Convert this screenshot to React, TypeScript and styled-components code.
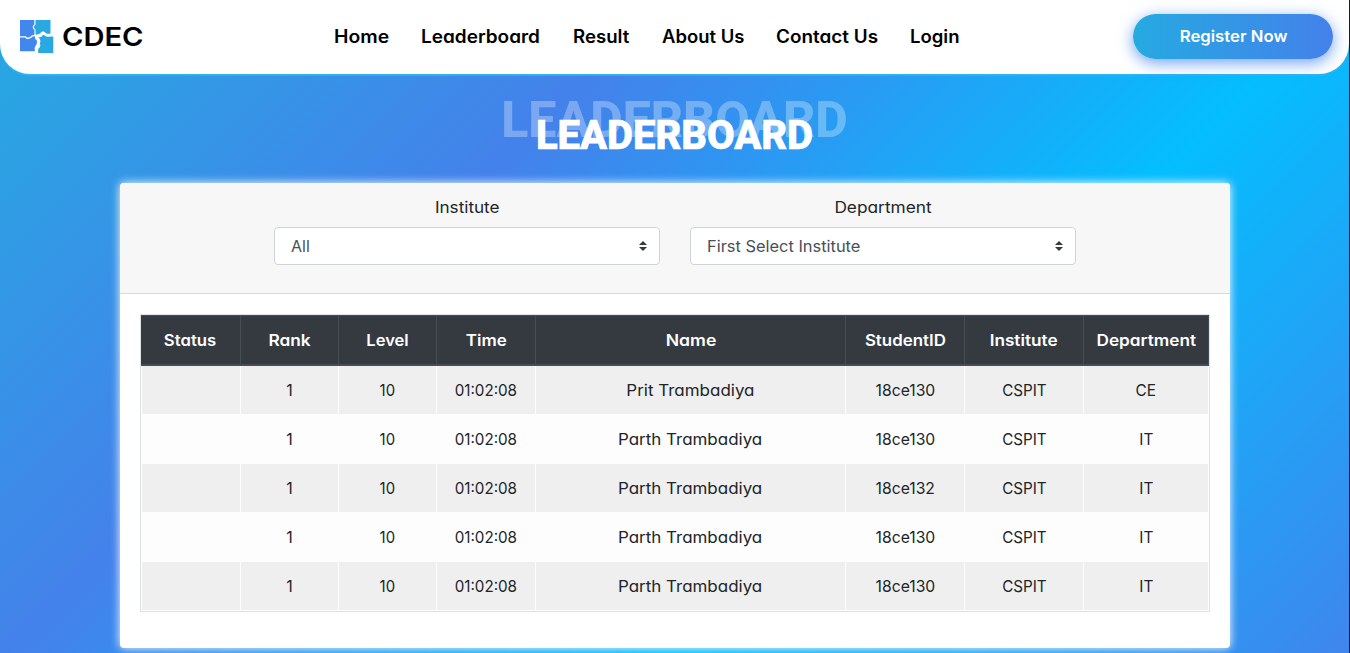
import React from "react";
import styled, { createGlobalStyle } from "styled-components";

const GlobalStyle = createGlobalStyle`
  *, *::before, *::after { box-sizing: border-box; }
  html, body { margin: 0; height: 653px; overflow: hidden; }
  body {
    font-family: Inter, "Open Sans", sans-serif;
    font-feature-settings: "cv11";
    font-size: 16px;
    line-height: 24px;
    color: #212529;
  }
`;

const Page = styled.div`
  display: flex;
  flex-direction: column;
  align-items: center;
  height: 653px;
  border-right: 1px solid #151c24;
  background: linear-gradient(135deg, #25aae1, #4481eb, #04befe, #3f86ed);
`;

const Header = styled.header`
  display: flex;
  align-items: center;
  flex: none;
  width: 100%;
  height: 74px;
  padding: 0 16px 0 20px;
  background: #fff;
  border-radius: 0 0 30px 30px;
  box-shadow: 0 2px 0 -0.3px #2fb3f3;
`;

const Brand = styled.a`
  display: flex;
  align-items: center;
  gap: 8px;
  width: 313.5px;
  padding-bottom: 1px;
  color: #000;
`;

const BrandName = styled.span`
  font-size: 26px;
  font-weight: 600;
  transform: scaleX(1.12);
  transform-origin: left center;
`;

const Nav = styled.nav`
  display: flex;
  gap: 32px;
`;

const NavLink = styled.a<{ $width: number; $stretch: number }>`
  width: ${(p) => p.$width}px;
  font-size: 18px;
  font-weight: 600;
  color: #000;
  white-space: nowrap;
  transform: scaleX(${(p) => p.$stretch});
  transform-origin: left center;
`;

const Wide = styled.span<{ $stretch: number; $origin?: string }>`
  display: inline-block;
  white-space: nowrap;
  transform: scaleX(${(p) => p.$stretch});
  transform-origin: ${(p) => p.$origin ?? "center"};
`;

const RegisterButton = styled.button`
  width: 200px;
  height: 45px;
  margin: 0 0 1px auto;
  padding: 0 0 2px 1px;
  border: 0;
  border-radius: 50px;
  font: inherit;
  font-weight: 600;
  color: #fff;
  background: linear-gradient(to right, #25aae1, #4481eb);
  box-shadow: 0 4px 15px 0 rgba(65, 132, 234, 0.75);
`;

const Title = styled.h1`
  position: relative;
  flex: none;
  margin: 39px 0 24px;
  font-family: Roboto, sans-serif;
  font-size: 40px;
  line-height: 46px;
  font-weight: 800;
  color: #fff;
`;

const TitleEcho = styled.span`
  position: absolute;
  left: 50%;
  top: -16px;
  transform: translateX(-50%);
  font-size: 50px;
  color: rgba(255, 255, 255, 0.3);
`;

const TitleText = styled.span`
  position: relative;
  -webkit-text-stroke: 0.7px #fff;
`;

const Card = styled.section`
  flex: none;
  width: 1110px;
  height: 465px;
  margin-left: 1px;
  border-radius: 4px;
  background: #fff;
  box-shadow: 0 0 10px #fff;
`;

const Filters = styled.div`
  display: flex;
  justify-content: center;
  gap: 30px;
  height: 111px;
  padding-top: 12px;
  border-bottom: 1px solid #d9dadb;
  border-radius: 4px 4px 0 0;
  background: #f7f7f7;
`;

const Field = styled.div`
  display: flex;
  flex-direction: column;
  align-items: center;
  gap: 8px;
  width: 386px;
`;

const Select = styled.div`
  display: flex;
  align-items: center;
  justify-content: space-between;
  width: 100%;
  height: 38px;
  padding: 0 12px 0 16px;
  border: 1px solid #ced4da;
  border-radius: 4px;
  background: #fff;
  color: #495057;
`;

const TableFrame = styled.div`
  margin: 20px 20px 0;
  border: 1px solid #dee2e6;
`;

const Table = styled.table`
  width: 1068px;
  table-layout: fixed;
  border-collapse: separate;
  border-spacing: 0;
  text-align: center;
`;

const HeadCell = styled.th`
  height: 51px;
  padding: 0;
  border: solid #454d55;
  border-width: 1px 1px 2px 0;
  background: #343a40;
  color: #fff;
  font-weight: 600;
`;

const BodyRow = styled.tr`
  background: #fdfdfd;
  &:nth-child(odd) { background: #efefef; }
`;

const Cell = styled.td`
  height: 49px;
  padding: 0;
  border: solid #fdfdfd;
  border-width: 0 1px 1px 0;
  &:first-child { border-left-width: 1px; }
`;

const LogoMark = () => (
  <svg width="34" height="35" viewBox="0 0 34 35">
    <path fill="#4187ee" d="M0 1h14.3v4.5c-2.2 1.4-2 4 .1 5.2V16c-2.3-.3-3.2.6-4 1.8-1.4 1.2-3.6 1.1-4.6-.6H0z" />
    <path fill="#28a9e2" d="M15.5 1h15v13.4c-2.2.5-4.3.4-5-.5-1.2-1.8-4.1-1.9-5.2.3-1 .9-3 1.4-4.8 1.3v-5c-2.2-1.5-2.1-3.6 0-4.8z" />
    <path fill="#4187ee" d="M0 18.4h5.2c1.3 1.9 4.4 2 6 .4 1-1 2.2-1.8 3.6-1.5 0 1.9.4 3.1 1.8 3.8.7 2.1.5 3.7-.8 5.4-1.2 1.3-1.3 2.8-.9 5.7H0z" />
    <path fill="#28a9e2" d="M18.3 18.2c2.2-.1 4.1-.6 4.5-2.3 1-.7 2.4 1.8 4.4 1.8 1.6 0 2.5-.4 6.1-.3V34H18.2v-3.9c2-1.8 2.8-3.6 1.6-5.5 1.1-2.1.8-4.4-1.5-6.4z" />
  </svg>
);

const Arrows = () => (
  <svg width="8" height="10" viewBox="0 0 4 5">
    <path fill="#343a40" d="M2 0L0 2h4zm0 5L0 3h4z" />
  </svg>
);

const links: [string, number, number][] = [
  ["Home", 55.4, 1.075], ["Leaderboard", 120.3, 1.055], ["Result", 56.4, 1.035],
  ["About Us", 82.2, 1.025], ["Contact Us", 102.2, 1.05], ["Login", 50, 1.03],
];

const columns: [string, number, number][] = [
  ["Status", 100, 1.045], ["Rank", 98, 1.08], ["Level", 98, 1.035], ["Time", 99, 1.06],
  ["Name", 310, 1.1], ["StudentID", 119, 1.055], ["Institute", 119, 1.075], ["Department", 125, 1.075],
];

const stretch = [1, 1, 0.93, 0.95, 1.06, 0.98, 0.95, 0.96];

const rows = [
  ["", "1", "10", "01:02:08", "Prit Trambadiya", "18ce130", "CSPIT", "CE"],
  ["", "1", "10", "01:02:08", "Parth Trambadiya", "18ce130", "CSPIT", "IT"],
  ["", "1", "10", "01:02:08", "Parth Trambadiya", "18ce132", "CSPIT", "IT"],
  ["", "1", "10", "01:02:08", "Parth Trambadiya", "18ce130", "CSPIT", "IT"],
  ["", "1", "10", "01:02:08", "Parth Trambadiya", "18ce130", "CSPIT", "IT"],
];

export default function App() {
  return (
    <Page>
      <GlobalStyle />
      <Header>
        <Brand>
          <LogoMark />
          <BrandName>CDEC</BrandName>
        </Brand>
        <Nav>
          {links.map(([label, width, s]) => (
            <NavLink key={label} $width={width} $stretch={s}>{label}</NavLink>
          ))}
        </Nav>
        <RegisterButton><Wide $stretch={1.045}>Register Now</Wide></RegisterButton>
      </Header>
      <Title>
        <TitleEcho aria-hidden>LEADERBOARD</TitleEcho>
        <TitleText>LEADERBOARD</TitleText>
      </Title>
      <Card>
        <Filters>
          <Field>
            <Wide $stretch={1.07}>Institute</Wide>
            <Select><Wide $stretch={1} $origin="left">All</Wide><Arrows /></Select>
          </Field>
          <Field>
            <Wide $stretch={1.08}>Department</Wide>
            <Select><Wide $stretch={1.025} $origin="left">First Select Institute</Wide><Arrows /></Select>
          </Field>
        </Filters>
        <TableFrame>
          <Table>
            <colgroup>{columns.map(([name, width]) => <col key={name} width={width} />)}</colgroup>
            <thead>
              <tr>
                {columns.map(([name, , s]) => <HeadCell key={name}><Wide $stretch={s}>{name}</Wide></HeadCell>)}
              </tr>
            </thead>
            <tbody>
              {rows.map((row, r) => (
                <BodyRow key={r}>
                  {row.map((value, c) => <Cell key={c}><Wide $stretch={stretch[c]}>{value}</Wide></Cell>)}
                </BodyRow>
              ))}
            </tbody>
          </Table>
        </TableFrame>
      </Card>
    </Page>
  );
}
